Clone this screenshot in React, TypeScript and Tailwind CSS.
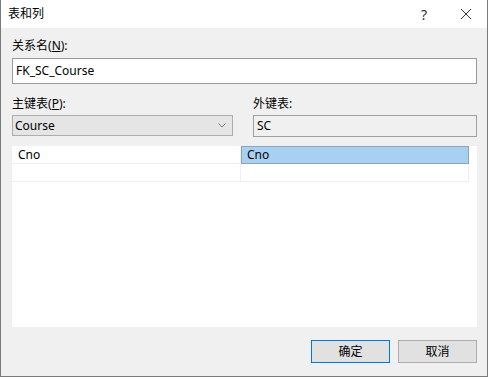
const font = { fontFamily: '"Segoe UI", "Noto Sans", "Noto Sans CJK SC", sans-serif' };

function Mnemonic({ label, k }: { label: string; k: string }) {
  return (
    <span>
      {label}(<span className="underline">{k}</span>):
    </span>
  );
}

export default function App() {
  return (
    <div
      className="w-[488px] h-[377px] flex flex-col border-x border-b border-[#7a7a7a] bg-[#f0f0f0] text-[12px] text-black box-border"
      style={font}
    >
      {/* title bar */}
      <div className="h-[28px] bg-white flex items-center pl-[7px] shrink-0">
        <span className="leading-none">表和列</span>
        <span className="ml-auto mr-[33px] text-[14px] text-[#333]">?</span>
        <svg width="12" height="12" viewBox="0 0 12 12" className="mr-[15px]">
          <path d="M1 1 L11 11 M11 1 L1 11" stroke="#333" strokeWidth="1" />
        </svg>
      </div>

      {/* body */}
      <div className="flex-1 flex flex-col pl-[11px] pr-[10px] pt-[10px]">
        <div className="leading-[16px]">
          <Mnemonic label="关系名" k="N" />
        </div>
        <div className="mt-[4px] h-[26px] bg-white border border-[#9a9a9a] flex items-center pl-[3px]">
          FK_SC_Course
        </div>

        <div className="mt-[12px] flex">
          <div className="w-[221px] flex flex-col">
            <div className="leading-[16px]">
              <Mnemonic label="主键表" k="P" />
            </div>
            <div className="mt-[3px] h-[21px] bg-[#e5e5e5] border border-[#adadad] flex items-center pl-[2px]">
              <span>Course</span>
              <svg width="8" height="5" viewBox="0 0 8 5" className="ml-auto mr-[6px]">
                <path d="M0.5 0.5 L4 4 L7.5 0.5" stroke="#7a7a7a" fill="none" strokeWidth="1" />
              </svg>
            </div>
          </div>
          <div className="ml-[20px] flex-1 flex flex-col">
            <div className="leading-[16px]">外键表:</div>
            <div className="mt-[3px] h-[22px] bg-[#f0f0f0] border border-[#a0a0a0] flex items-center pl-[3px]">
              SC
            </div>
          </div>
        </div>

        {/* column grid */}
        <div className="mt-[9px] h-[181px] bg-white flex flex-col">
          <div className="flex h-[18px]">
            <div className="w-[229px] flex items-center pl-[6px] border-r border-b border-[#f0f0f0]">Cno</div>
            <div className="w-[228px] flex items-center pl-[5px] bg-[#a8d0f3] border border-[#8da3b8]">Cno</div>
          </div>
          <div className="flex h-[18px]">
            <div className="w-[229px] border-r border-b border-[#f0f0f0]" />
            <div className="w-[228px] border-r border-b border-[#f0f0f0]" />
          </div>
        </div>

        {/* buttons */}
        <div className="mt-[13px] flex justify-end gap-[8px]">
          <button className="w-[79px] h-[23px] bg-[#e1e1e1] border border-[#0078d7] text-[12px] leading-none">
            确定
          </button>
          <button className="w-[79px] h-[23px] bg-[#e1e1e1] border border-[#adadad] text-[12px] leading-none">
            取消
          </button>
        </div>
      </div>
    </div>
  );
}
